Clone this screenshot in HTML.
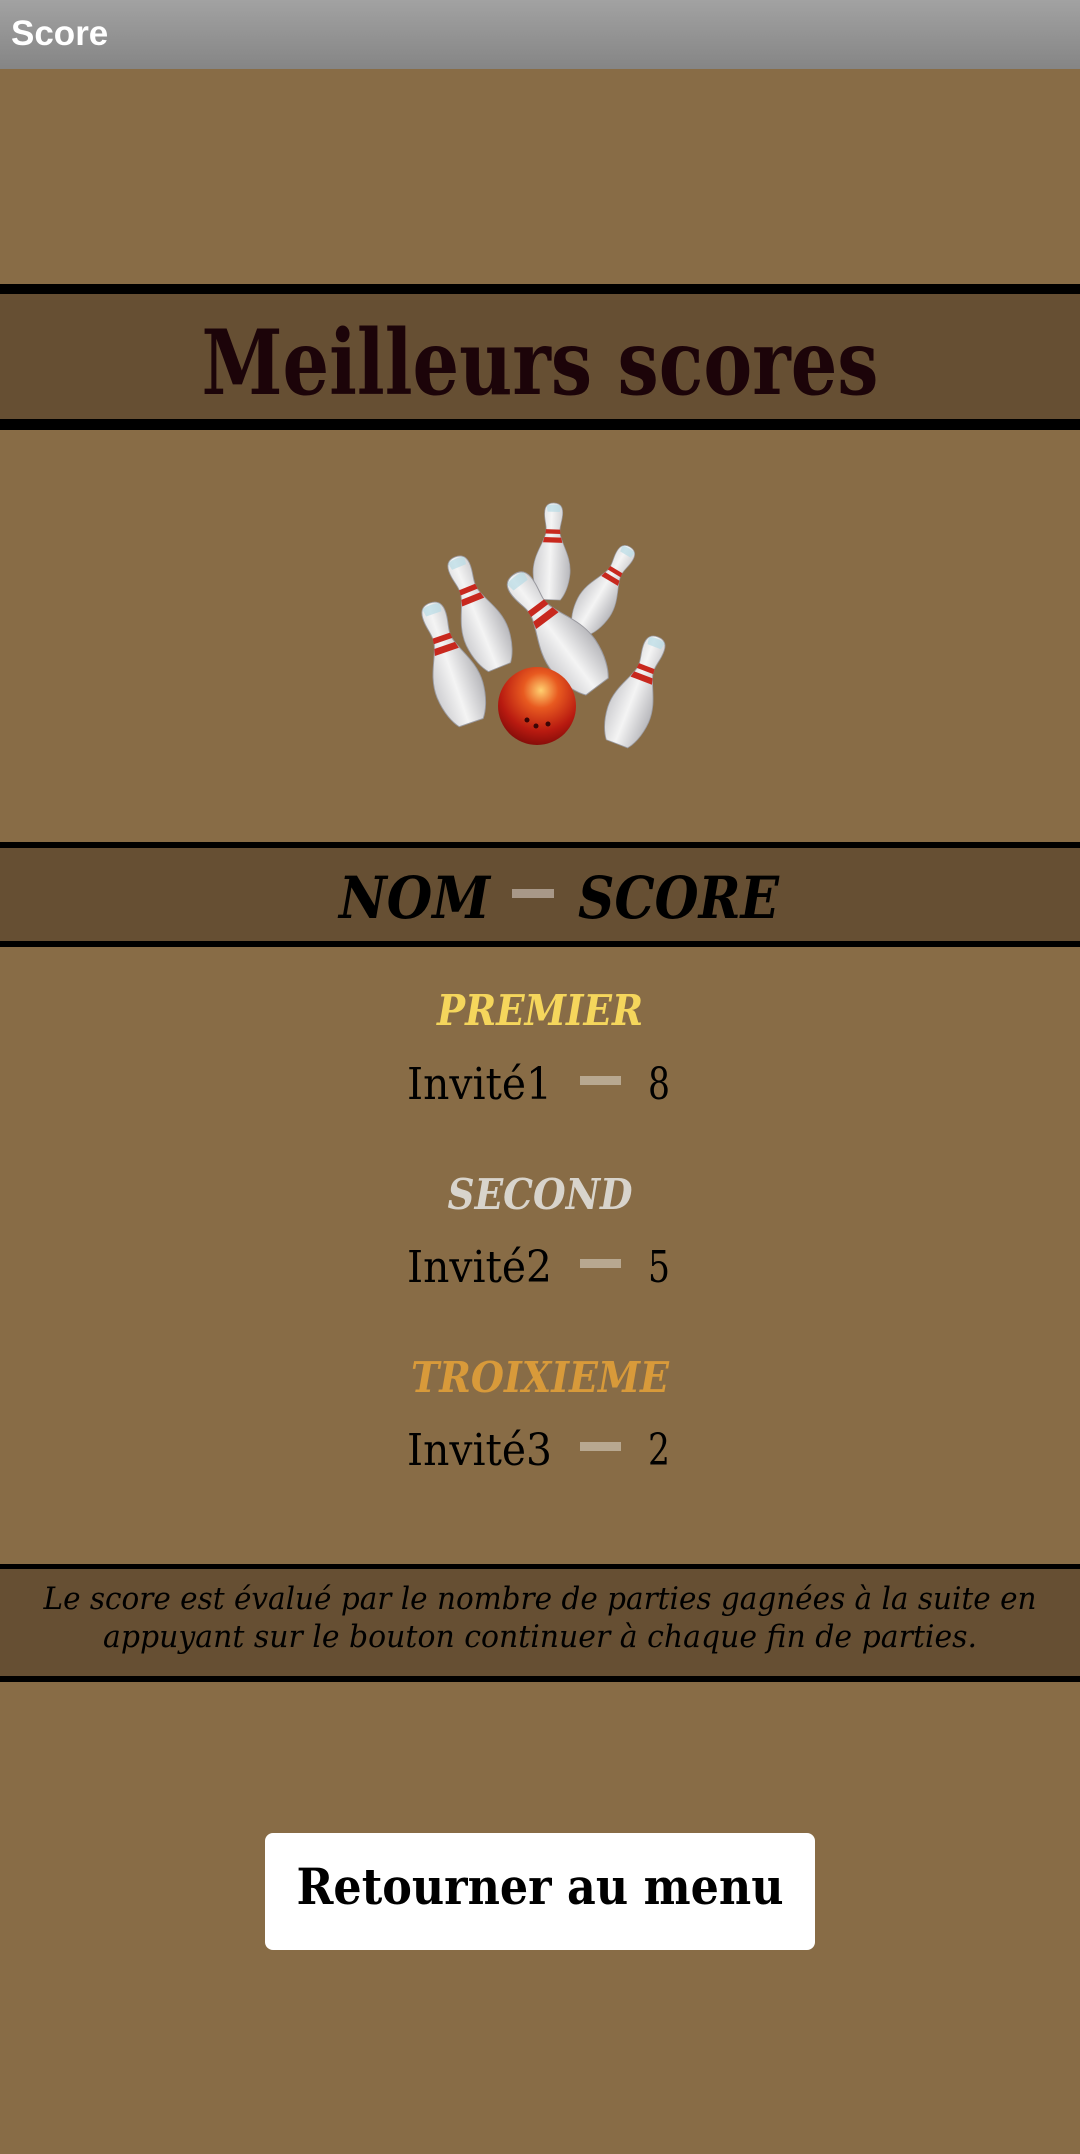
<!DOCTYPE html>
<html><head><meta charset="utf-8"><style>
html,body{margin:0;padding:0;background:#886C46;}
svg{display:block;}
</style></head><body>
<svg width="1080" height="2154" viewBox="0 0 1080 2154" xmlns="http://www.w3.org/2000/svg">
<defs>
<linearGradient id="sb" x1="0" y1="0" x2="0" y2="1"><stop offset="0" stop-color="#a2a2a2"/><stop offset="1" stop-color="#858585"/></linearGradient>
<linearGradient id="pinG" x1="0" y1="0" x2="1" y2="0"><stop offset="0" stop-color="#cfcfd2"/><stop offset="0.45" stop-color="#f4f4f4"/><stop offset="1" stop-color="#b8b8bc"/></linearGradient>
<radialGradient id="ballG" cx="0.55" cy="0.3" r="0.75"><stop offset="0" stop-color="#ffd070"/><stop offset="0.3" stop-color="#e85a20"/><stop offset="0.7" stop-color="#b81a10"/><stop offset="1" stop-color="#7a0a08"/></radialGradient>
<g id="pin">
<path d="M0,0 C10,0 11,8 10,16 C9,24 7,28 8,34 C10,46 22,60 21,80 C20,95 15,105 11,110 L-11,110 C-15,105 -20,95 -21,80 C-22,60 -10,46 -8,34 C-7,28 -9,24 -10,16 C-11,8 -10,0 0,0Z" fill="url(#pinG)" stroke="#9a9aa0" stroke-width="0.8"/>
<path d="M-8,4 C-8,1 8,1 8,4 L7,10 L-7,10Z" fill="#b8dce6" opacity="0.7"/>
<path d="M-8,30 L8,30 L8.5,35 L-8.5,35Z" fill="#c8281e"/>
<path d="M-9.5,39 L9.5,39 L11,45 L-11,45Z" fill="#c8281e"/>
</g>
</defs>
<rect width="1080" height="2154" fill="#886C46"/>
<rect width="1080" height="69" fill="url(#sb)"/>
<text x="11" y="45" font-family="Liberation Sans, sans-serif" font-weight="bold" font-size="35" fill="#fff">Score</text>

<rect y="284" width="1080" height="10" fill="#000"/>
<rect y="294" width="1080" height="125" fill="#664F33"/>
<rect y="419" width="1080" height="11" fill="#000"/>
<text x="540" y="394" text-anchor="middle" font-family="DejaVu Serif, serif" font-weight="bold" font-size="90" fill="#1c0409" textLength="677" lengthAdjust="spacingAndGlyphs">Meilleurs scores</text>

<use href="#pin" transform="translate(554,503) rotate(2) scale(0.88)"/>
<use href="#pin" transform="translate(630,547) rotate(31) scale(0.88)"/>
<use href="#pin" transform="translate(455,557) rotate(-22) scale(1.08)"/>
<use href="#pin" transform="translate(430,603) rotate(-19) scale(1.15)"/>
<use href="#pin" transform="translate(513,575) rotate(-37) scale(1.27)"/>
<circle cx="537" cy="706" r="39" fill="url(#ballG)"/>
<circle cx="527" cy="720" r="2.5" fill="#3a0505"/><circle cx="536" cy="726" r="2.5" fill="#3a0505"/><circle cx="548" cy="724" r="2.5" fill="#3a0505"/>
<use href="#pin" transform="translate(658,637) rotate(21) scale(1.04)"/>

<rect y="842" width="1080" height="6" fill="#000"/>
<rect y="848" width="1080" height="93" fill="#664F33"/>
<rect y="941" width="1080" height="6" fill="#000"/>
<text x="339" y="918" font-family="DejaVu Serif, serif" font-weight="bold" font-style="italic" font-size="58" fill="#000" textLength="151" lengthAdjust="spacingAndGlyphs">NOM</text>
<rect x="512" y="889" width="42" height="9" fill="#a89888"/>
<text x="578" y="918" font-family="DejaVu Serif, serif" font-weight="bold" font-style="italic" font-size="58" fill="#000" textLength="201" lengthAdjust="spacingAndGlyphs">SCORE</text>

<g font-family="DejaVu Serif, serif">
<text x="540" y="1025" text-anchor="middle" font-weight="bold" font-style="italic" font-size="42" fill="#f5d65c" textLength="206" lengthAdjust="spacingAndGlyphs">PREMIER</text>
<text x="407" y="1099" font-size="44" fill="#000" textLength="145" lengthAdjust="spacingAndGlyphs">Invité1</text>
<rect x="580" y="1076" width="41" height="9" fill="#b8a890"/>
<text x="648" y="1099" font-size="44" fill="#000" textLength="22" lengthAdjust="spacingAndGlyphs">8</text>

<text x="540" y="1209" text-anchor="middle" font-weight="bold" font-style="italic" font-size="42" fill="#d8d4cc" textLength="185" lengthAdjust="spacingAndGlyphs">SECOND</text>
<text x="407" y="1282" font-size="44" fill="#000" textLength="145" lengthAdjust="spacingAndGlyphs">Invité2</text>
<rect x="580" y="1259" width="41" height="9" fill="#b8a890"/>
<text x="648" y="1282" font-size="44" fill="#000" textLength="22" lengthAdjust="spacingAndGlyphs">5</text>

<text x="540" y="1392" text-anchor="middle" font-weight="bold" font-style="italic" font-size="42" fill="#d89a3a" textLength="258" lengthAdjust="spacingAndGlyphs">TROIXIEME</text>
<text x="407" y="1465" font-size="44" fill="#000" textLength="145" lengthAdjust="spacingAndGlyphs">Invité3</text>
<rect x="580" y="1442" width="41" height="9" fill="#b8a890"/>
<text x="648" y="1465" font-size="44" fill="#000" textLength="22" lengthAdjust="spacingAndGlyphs">2</text>
</g>

<rect y="1564" width="1080" height="5" fill="#000"/>
<rect y="1569" width="1080" height="107" fill="#664F33"/>
<rect y="1676" width="1080" height="6" fill="#000"/>
<text x="540" y="1609" text-anchor="middle" font-family="DejaVu Serif, serif" font-style="italic" font-size="31" fill="#000" textLength="993" lengthAdjust="spacingAndGlyphs">Le score est évalué par le nombre de parties gagnées à la suite en</text>
<text x="540" y="1647" text-anchor="middle" font-family="DejaVu Serif, serif" font-style="italic" font-size="31" fill="#000" textLength="874" lengthAdjust="spacingAndGlyphs">appuyant sur le bouton continuer à chaque fin de parties.</text>

<rect x="265" y="1833" width="550" height="117" rx="8" fill="#fff"/>
<text x="540" y="1904" text-anchor="middle" font-family="DejaVu Serif, serif" font-weight="bold" font-size="50" fill="#000" textLength="487" lengthAdjust="spacingAndGlyphs">Retourner au menu</text>
</svg>
</body></html>
